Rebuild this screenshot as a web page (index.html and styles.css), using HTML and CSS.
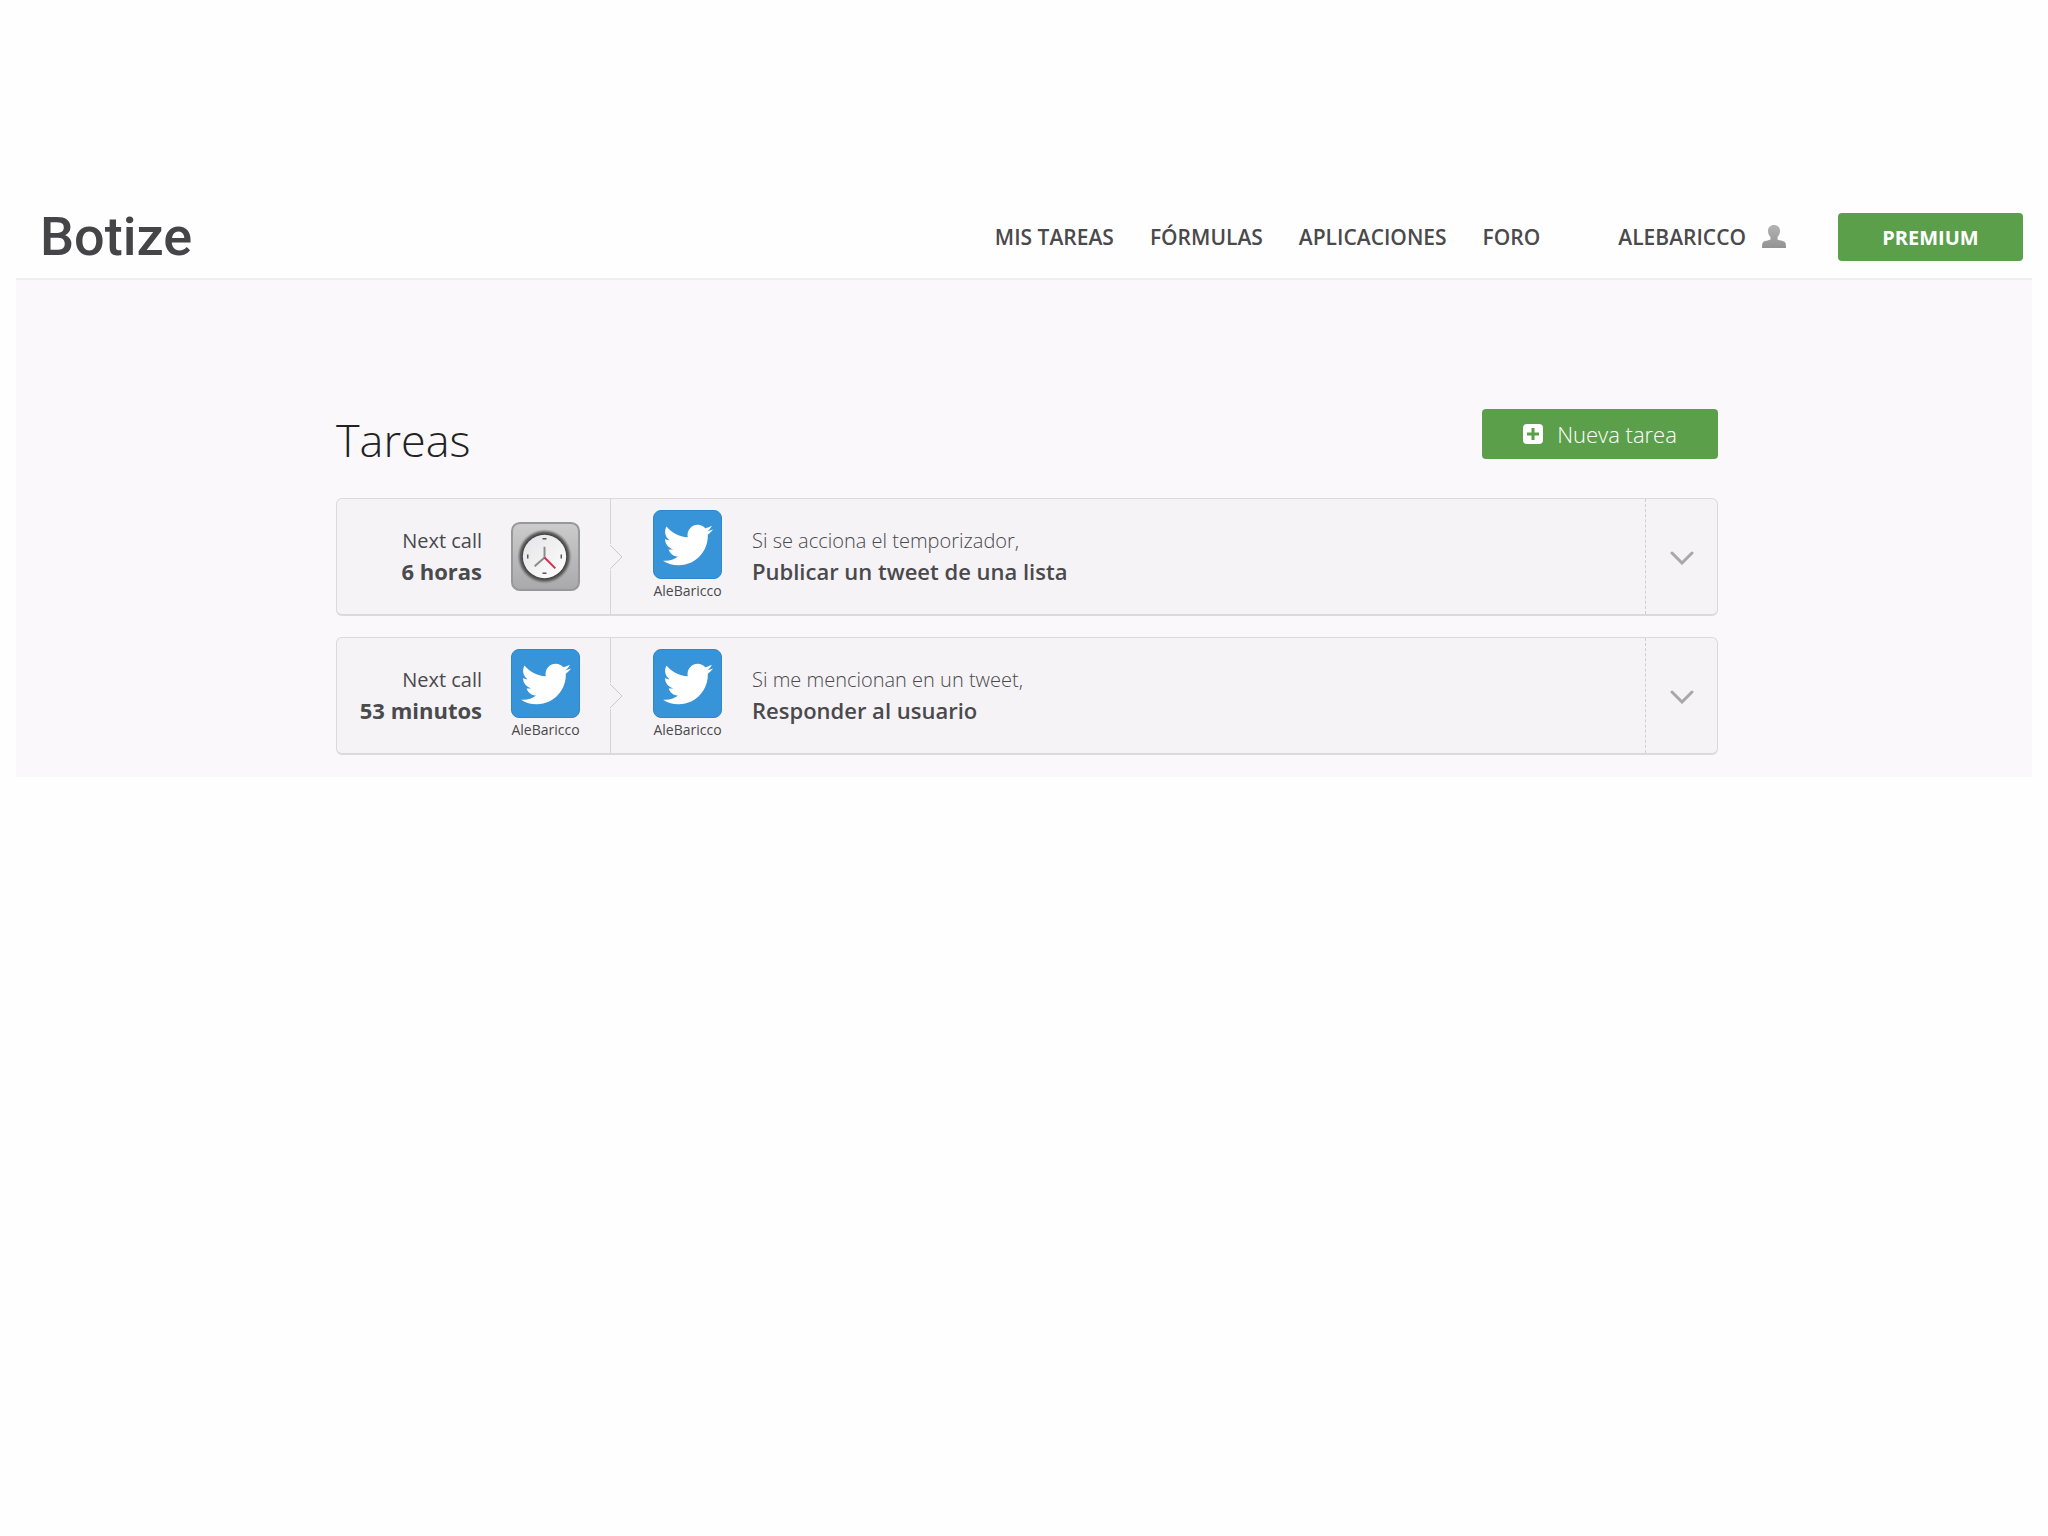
FILE: index.html
```html
<!DOCTYPE html>
<html lang="es">
<head>
  <meta charset="UTF-8">
  <title>Tareas - Botize</title>
  <link rel="stylesheet" href="styles.css">
</head>
<body>
  <svg class="sprite" aria-hidden="true">
    <symbol id="bird" viewBox="0 0 24 24">
      <path d="M24 4.6c-.9.4-1.8.7-2.8.8 1-.6 1.800-1.600 2.200-2.700-1 .6-2 1-3.100 1.200-.9-1-2.200-1.600-3.600-1.600-3.200 0-5.500 3-4.800 6C7.700 8.100 4.100 6.100 1.700 3.100.4 5.300 1 8.200 3.200 9.700c-.8 0-1.600-.2-2.200-.6-.1 2.300 1.600 4.400 3.900 4.900-.7.200-1.500.2-2.200.1.600 2 2.400 3.400 4.600 3.400-2.100 1.600-4.700 2.300-7.300 2 2.200 1.400 4.800 2.200 7.500 2.200 9.100 0 14.300-7.700 14-14.600 1-.7 1.800-1.600 2.500-2.500z"/>
    </symbol>
    <symbol id="chevron" viewBox="0 0 24 14">
      <path d="M2 2l10 10L22 2" fill="none" stroke="currentColor" stroke-width="3" stroke-linecap="round"/>
    </symbol>
    <symbol id="notch" viewBox="0 0 14 26">
      <path d="M0 0h1l12 13L1 26H0z" class="notch-fill"/>
      <path d="M0 1l12 12L0 25" class="notch-line"/>
    </symbol>
  </svg>

  <header class="header">
    <a class="logo" href="#">Botize</a>
    <nav class="nav">
      <a href="#">MIS TAREAS</a>
      <a href="#">FÓRMULAS</a>
      <a href="#">APLICACIONES</a>
      <a href="#">FORO</a>
    </nav>
    <a class="user" href="#">
      ALEBARICCO
      <svg class="user-icon" viewBox="0 0 24 24" aria-hidden="true">
        <defs>
          <linearGradient id="userGrad" x1="0" y1="0" x2="0" y2="1">
            <stop offset="0" stop-color="#b4b4b4"/>
            <stop offset="1" stop-color="#929292"/>
          </linearGradient>
        </defs>
        <path fill="url(#userGrad)" d="M12 0c3.700 0 6 2.500 6 6 0 2.500-1 4.700-2.500 6v2.500c1 1 7 1 8 3.500.4 1 .5 3 .5 5H0c0-2 .1-4 .5-5 1-2.500 7-2.500 8-3.500V12C7 10.700 6 8.500 6 6c0-3.500 2.300-6 6-6z"/>
      </svg>
    </a>
    <a class="button premium" href="#">PREMIUM</a>
  </header>

  <main class="main">
    <div class="container">
      <div class="title-row">
        <h1>Tareas</h1>
        <button class="button new-task" type="button">
          <svg class="plus-icon" viewBox="0 0 20 20" aria-hidden="true">
            <rect width="20" height="20" rx="4" fill="#fff"/>
            <path d="M10 4v12M4 10h12" stroke="#5b9f4b" stroke-width="3"/>
          </svg>
          Nueva tarea
        </button>
      </div>

      <article class="task">
        <div class="trigger">
          <p class="next-call">Next call <strong>6 horas</strong></p>
          <div class="app">
            <svg class="clock" viewBox="0 0 70 70" role="img" aria-label="Temporizador">
              <defs>
                <linearGradient id="clockBox" x1="0" y1="0" x2="0" y2="1">
                  <stop offset="0" stop-color="#cdcccd"/>
                  <stop offset="1" stop-color="#a9a8aa"/>
                </linearGradient>
                <linearGradient id="clockFace" x1="0" y1="0" x2="1" y2="1">
                  <stop offset="0" stop-color="#e4e3e5"/>
                  <stop offset="1" stop-color="#ffffff"/>
                </linearGradient>
                <radialGradient id="clockRim">
                  <stop offset="0.8" stop-color="#444"/>
                  <stop offset="0.880" stop-color="#666"/>
                  <stop offset="1" stop-color="#999" stop-opacity="0"/>
                </radialGradient>
              </defs>
              <rect x="1" y="1" width="68" height="68" rx="8" fill="url(#clockBox)" stroke="#98979a" stroke-width="2"/>
              <circle cx="34" cy="35" r="28" fill="url(#clockRim)"/>
              <circle cx="34" cy="35" r="22" fill="url(#clockFace)"/>
              <path d="M32 17h4M32 52h4M17 33v4M51 33v4" stroke="#555" stroke-width="1.500"/>
              <path d="M34 25v11L24 45" fill="none" stroke="#8b8b8b" stroke-width="2"/>
              <path d="M34 36l11 11" stroke="#d5304f" stroke-width="2"/>
            </svg>
          </div>
          <svg class="notch"><use href="#notch"/></svg>
        </div>
        <div class="action">
          <div class="app">
            <span class="twitter"><svg class="bird" role="img" aria-label="Twitter"><use href="#bird"/></svg></span>
            <span class="account">AleBaricco</span>
          </div>
          <p class="description">Si se acciona el temporizador, <strong>Publicar un tweet de una lista</strong></p>
        </div>
        <button class="expand" type="button" aria-label="Ver opciones"><svg class="chevron"><use href="#chevron"/></svg></button>
      </article>

      <article class="task">
        <div class="trigger">
          <p class="next-call">Next call <strong>53 minutos</strong></p>
          <div class="app">
            <span class="twitter"><svg class="bird" role="img" aria-label="Twitter"><use href="#bird"/></svg></span>
            <span class="account">AleBaricco</span>
          </div>
          <svg class="notch"><use href="#notch"/></svg>
        </div>
        <div class="action">
          <div class="app">
            <span class="twitter"><svg class="bird" role="img" aria-label="Twitter"><use href="#bird"/></svg></span>
            <span class="account">AleBaricco</span>
          </div>
          <p class="description">Si me mencionan en un tweet, <strong>Responder al usuario</strong></p>
        </div>
        <button class="expand" type="button" aria-label="Ver opciones"><svg class="chevron"><use href="#chevron"/></svg></button>
      </article>
    </div>
  </main>
</body>
</html>
```

FILE: styles.css
```css
* {
  box-sizing: border-box;
}

body {
  font-family: "Open Sans", "Noto Sans", sans-serif;
  font-size: 20px;
  color: #4a494c;
  background-color: #fefefe;
  margin: 0;
  padding: 196px 16px 0;
}

a {
  color: inherit;
  text-decoration: none;
}

.sprite {
  display: none;
}

/* header */
.header {
  display: flex;
  align-items: center;
  height: 84px;
  padding: 0 9px 0 24px;
  border-bottom: 2px solid #eeedf0;
}

.logo {
  font-family: Roboto, "Open Sans", sans-serif;
  font-size: 54px;
  font-weight: 500;
  line-height: 64px;
  color: #454446;
}

.nav {
  display: flex;
  gap: 36px;
  margin-left: auto;
  font-size: 21px;
  font-weight: 600;
}

.user {
  display: flex;
  align-items: center;
  gap: 16px;
  margin: 0 52px 0 78px;
  font-size: 21px;
  font-weight: 600;
}

.user-icon {
  width: 24px;
  height: 24px;
}

.button {
  display: flex;
  align-items: center;
  justify-content: center;
  background-color: #5b9f4b;
  color: #fff;
  border: none;
  border-radius: 4px;
  font-family: inherit;
  cursor: pointer;
}

.button:hover {
  background-color: #4f8f40;
}

.premium {
  width: 185px;
  height: 48px;
  font-weight: 700;
}

/* task list */
.main {
  background-color: #faf8fb;
  padding: 129px 0 22px 6px;
}

.container {
  max-width: 1382px;
  margin: 0 auto;
}

.title-row {
  display: flex;
  justify-content: space-between;
  align-items: flex-start;
  height: 89px;
}

h1 {
  margin: 0;
  font-size: 45px;
  font-weight: 300;
  line-height: 62px;
  color: #222;
}

.new-task {
  gap: 14px;
  width: 236px;
  height: 50px;
  font-size: 22px;
  font-weight: 300;
}

.plus-icon {
  width: 20px;
  height: 20px;
}

.task {
  display: flex;
  height: 118px;
  margin-bottom: 21px;
  background-color: #f5f3f6;
  border: 1px solid #dad9dc;
  border-bottom-width: 2px;
  border-radius: 6px;
}

.task:last-child {
  margin-bottom: 0;
}

.trigger {
  position: relative;
  display: flex;
  align-items: center;
  justify-content: flex-end;
  gap: 29px;
  width: 274px;
  padding-right: 30px;
  border-right: 1px solid #d5d4d7;
}

.notch {
  position: absolute;
  left: 100%;
  top: 50%;
  width: 14px;
  height: 26px;
  margin-top: -13px;
}

.notch-fill {
  fill: #f5f3f6;
}

.notch-line {
  fill: none;
  stroke: #c9c8cb;
  stroke-width: 1;
}

.action {
  display: flex;
  align-items: center;
  flex: 1;
  gap: 30px;
  padding-left: 42px;
}

.next-call,
.description {
  margin: 0;
  padding-bottom: 2px;
  line-height: 31px;
}

.next-call {
  text-align: right;
}

.next-call strong,
.description strong {
  display: block;
  font-size: 22px;
}

.description {
  font-weight: 300;
}

.description strong {
  font-weight: 600;
}

.app {
  display: flex;
  flex-direction: column;
  width: 69px;
}

.twitter {
  display: flex;
  align-items: center;
  justify-content: center;
  height: 69px;
  background-color: #3794d9;
  border: 1px solid #2f86c8;
  border-radius: 8px;
}

.bird {
  width: 50px;
  height: 50px;
  fill: #fff;
}

.clock {
  width: 69px;
  height: 69px;
}

.account {
  font-size: 14px;
  line-height: 24px;
  text-align: center;
}

.expand {
  display: flex;
  align-items: center;
  justify-content: center;
  width: 72px;
  padding: 2px 0 0;
  background: none;
  border: none;
  border-left: 1px dashed #cfced1;
  color: #a8a7a9;
  cursor: pointer;
}

.chevron {
  width: 24px;
  height: 14px;
}
```
